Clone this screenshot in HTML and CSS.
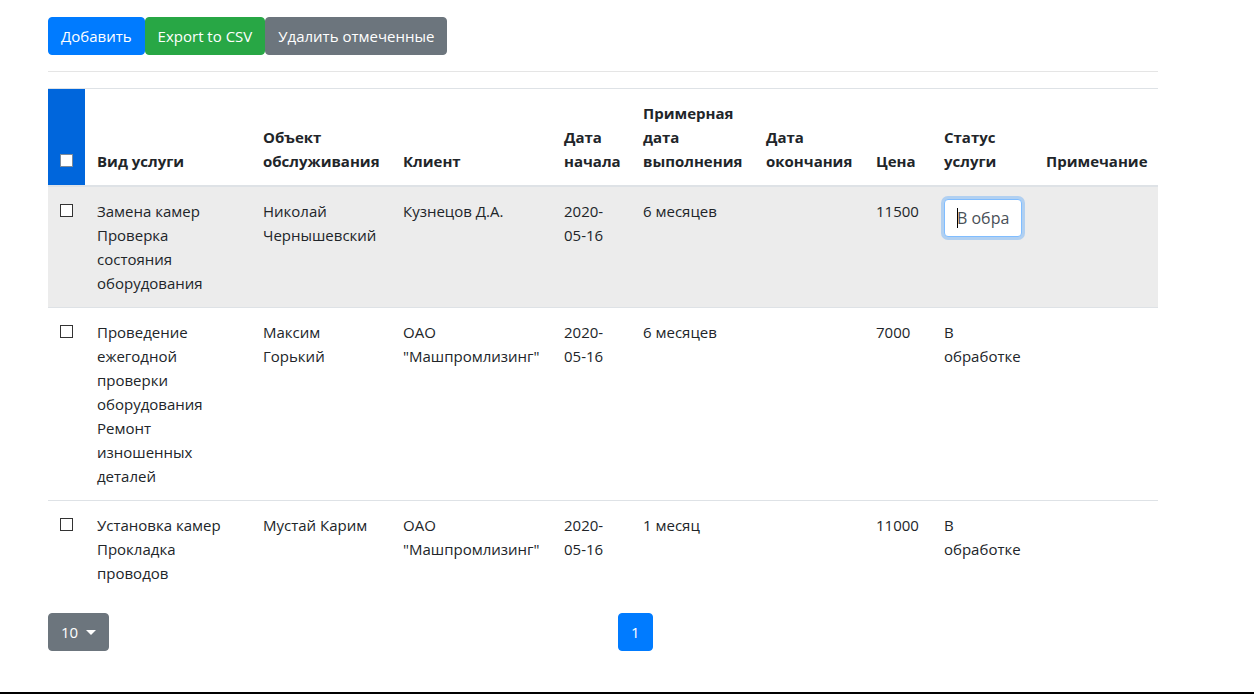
FILE: index.html
```html
<!DOCTYPE html>
<html lang="ru">
<head>
<meta charset="utf-8">
<title>Услуги</title>
<link rel="stylesheet" href="styles.css">
</head>
<body>
<div class="page">
  <div class="toolbar"><button class="btn btn-primary">Добавить</button><button class="btn btn-success">Export to CSV</button><button class="btn btn-secondary">Удалить отмеченные</button></div>
  <hr class="sep">
  <table class="table">
    <colgroup>
      <col class="c-chk"><col class="c-kind"><col class="c-obj"><col class="c-client"><col class="c-start"><col class="c-est"><col class="c-end"><col class="c-price"><col class="c-status"><col class="c-note">
    </colgroup>
    <thead>
      <tr>
        <th class="th-chk"><input type="checkbox" class="chk"></th>
        <th>Вид услуги</th>
        <th>Объект<br>обслуживания</th>
        <th>Клиент</th>
        <th>Дата<br>начала</th>
        <th>Примерная<br>дата<br>выполнения</th>
        <th>Дата<br>окончания</th>
        <th>Цена</th>
        <th>Статус<br>услуги</th>
        <th>Примечание</th>
      </tr>
    </thead>
    <tbody>
      <tr class="hover">
        <td><input type="checkbox" class="chk"></td>
        <td>Замена камер<br>Проверка<br>состояния<br>оборудования</td>
        <td>Николай<br>Чернышевский</td>
        <td>Кузнецов Д.А.</td>
        <td>2020-<br>05-16</td>
        <td>6 месяцев</td>
        <td></td>
        <td>11500</td>
        <td><div class="edit"><span class="edit-text">В обработке</span></div></td>
        <td></td>
      </tr>
      <tr>
        <td><input type="checkbox" class="chk"></td>
        <td>Проведение<br>ежегодной<br>проверки<br>оборудования<br>Ремонт<br>изношенных<br>деталей</td>
        <td>Максим<br>Горький</td>
        <td>ОАО<br>"Машпромлизинг"</td>
        <td>2020-<br>05-16</td>
        <td>6 месяцев</td>
        <td></td>
        <td>7000</td>
        <td>В<br>обработке</td>
        <td></td>
      </tr>
      <tr>
        <td><input type="checkbox" class="chk"></td>
        <td>Установка камер<br>Прокладка<br>проводов</td>
        <td>Мустай Карим</td>
        <td>ОАО<br>"Машпромлизинг"</td>
        <td>2020-<br>05-16</td>
        <td>1 месяц</td>
        <td></td>
        <td>11000</td>
        <td>В<br>обработке</td>
        <td></td>
      </tr>
    </tbody>
  </table>
  <div class="pager">
    <div><button class="btn btn-secondary dropdown">10</button></div>
    <div><span class="page-link">1</span></div>
  </div>
</div>
<div class="footer-line"></div>
</body>
</html>
```
FILE: styles.css
```css
html, body {
  margin: 0;
  padding: 0;
  background: #fff;
}
body {
  font-family: "Open Sans", "Noto Sans", sans-serif;
  font-size: 15px;
  line-height: 24px;
  color: #212529;
  overflow: hidden;
}
.page {
  width: 1110px;
  margin-left: 48px;
  padding-top: 17px;
}
.toolbar {
  display: flex;
}
.btn {
  font-family: inherit;
  font-size: 15px;
  line-height: 24px;
  padding: 6px 12px;
  border: 1px solid transparent;
  border-radius: 4px;
  color: #fff;
  cursor: pointer;
  margin: 0;
}
.btn-primary { background: #007bff; border-color: #007bff; }
.btn-success { background: #28a745; border-color: #28a745; }
.btn-secondary { background: #6c757d; border-color: #6c757d; }
.sep {
  margin: 16px 0;
  border: 0;
  border-top: 1px solid rgba(0, 0, 0, 0.1);
  height: 0;
}
.table {
  width: 1110px;
  table-layout: fixed;
  border-collapse: collapse;
}
.c-chk { width: 37px; }
.c-kind { width: 166px; }
.c-obj { width: 140px; }
.c-client { width: 161px; }
.c-start { width: 79px; }
.c-est { width: 123px; }
.c-end { width: 110px; }
.c-price { width: 68px; }
.c-status { width: 102px; }
.c-note { width: 124px; }
.table th, .table td {
  padding: 12px;
  text-align: left;
  border-top: 1px solid #dee2e6;
}
.table th {
  vertical-align: bottom;
  font-weight: 700;
  border-bottom: 2px solid #dee2e6;
}
.table td {
  vertical-align: top;
}
.th-chk {
  background: #0066dc;
}
.hover td {
  background: #ececec;
}
.chk {
  -webkit-appearance: none;
  appearance: none;
  width: 13px;
  height: 13px;
  margin: 0;
  border: 1px solid #333;
  background: #fff;
  vertical-align: middle;
  position: relative;
  top: -2px;
}
.th-chk .chk {
  border-color: #7d8a99;
}
.edit {
  box-sizing: border-box;
  width: 78px;
  height: 38px;
  padding: 6px 12px;
  border: 1px solid #80bdff;
  border-radius: 4px;
  background: #fff;
  box-shadow: 0 0 0 3px rgba(0, 123, 255, 0.25);
  color: #495057;
  font-size: 16px;
}
.edit-text {
  display: block;
  overflow: hidden;
  white-space: nowrap;
  position: relative;
}
.edit-text::before {
  content: "";
  position: absolute;
  left: 0;
  top: 2px;
  width: 1px;
  height: 20px;
  background: #000;
}
.pager {
  display: grid;
  grid-template-columns: 570px auto;
  margin-top: 16px;
}
.dropdown {
  display: inline-flex;
  align-items: center;
}
.dropdown::after {
  content: "";
  display: inline-block;
  margin-left: 8px;
  border-top: 5px solid #fff;
  border-left: 5px solid transparent;
  border-right: 5px solid transparent;
}
.page-link {
  display: inline-block;
  padding: 8px 12px;
  line-height: 20px;
  border: 1px solid #007bff;
  background: #007bff;
  color: #fff;
  border-radius: 4px;
}
.footer-line {
  margin-top: 41px;
  border-top: 2px solid #000;
}
```
